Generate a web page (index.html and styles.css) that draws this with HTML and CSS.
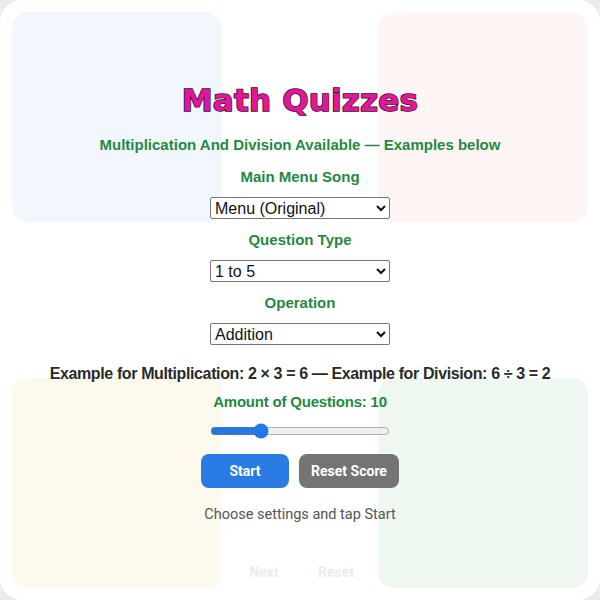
FILE: index.html
```html
<!DOCTYPE html>
<html lang="en">
<head>
    <meta charset="UTF-8">
    <meta name="viewport" content="width=device-width, initial-scale=1.0">
    <title>Math Quizzes</title>
    <link rel="stylesheet" href="styles.css">
</head>
<body>
    <div class="app">
        <!-- soft coloured tiles in the four corners -->
        <div class="tiles">
            <div class="tile tile-blue"></div>
            <div class="tile tile-pink"></div>
            <div class="tile tile-yellow"></div>
            <div class="tile tile-green"></div>
        </div>

        <div class="menu">
            <h1 class="title">Math Quizzes</h1>
            <p class="subtitle">Multiplication And Division Available — Examples below</p>

            <label for="songSelect" class="field-label">Main Menu Song</label>
            <select id="songSelect">
                <option>Menu (Original)</option>
                <option>Menu (Remix)</option>
            </select>

            <label for="typeSelect" class="field-label">Question Type</label>
            <select id="typeSelect">
                <option>1 to 5</option>
                <option>1 to 10</option>
                <option>1 to 12</option>
            </select>

            <label for="opSelect" class="field-label">Operation</label>
            <select id="opSelect">
                <option>Addition</option>
                <option>Subtraction</option>
                <option>Multiplication</option>
                <option>Division</option>
            </select>

            <p class="examples">Example for Multiplication: 2 × 3 = 6 — Example for Division: 6 ÷ 3 = 2</p>

            <label for="amountRange" class="field-label amount">Amount of Questions: <span id="amountValue">10</span></label>
            <input type="range" id="amountRange" min="1" max="35" value="10">

            <div class="actions">
                <button id="startBtn" class="btn btn-start">Start</button>
                <button id="resetScoreBtn" class="btn btn-reset">Reset Score</button>
            </div>

            <p id="status" class="status">Choose settings and tap Start</p>

            <div class="quiz-actions">
                <button class="btn btn-ghost" disabled>Next</button>
                <button class="btn btn-ghost" disabled>Reset</button>
            </div>
        </div>
    </div>

    <script>
        document.addEventListener('DOMContentLoaded', function() {
            const range = document.getElementById('amountRange');
            const amountValue = document.getElementById('amountValue');
            range.addEventListener('input', function() {
                amountValue.textContent = range.value;
            });
        });
    </script>
</body>
</html>
```

FILE: styles.css
```css
html, body {
    margin: 0;
    padding: 0;
    background-color: #ececec;
}

body {
    font-family: "Liberation Sans", Arial, sans-serif;
}

.app {
    position: relative;
    width: 600px;
    height: 600px;
    background-color: #ffffff;
    border-radius: 22px;
    overflow: hidden;
}

.tiles {
    position: absolute;
    inset: 0;
    padding: 12px;
    display: grid;
    grid-template-columns: 210px 1fr 210px;
    grid-template-rows: 210px 1fr 210px;
}

.tile {
    border-radius: 16px;
}

.tile-blue {
    grid-area: 1 / 1;
    background-color: #f2f7fe;
}

.tile-pink {
    grid-area: 1 / 3;
    background-color: #fef5f5;
}

.tile-yellow {
    grid-area: 3 / 1;
    background-color: #fef9ed;
}

.tile-green {
    grid-area: 3 / 3;
    background-color: #eff8f0;
}

.menu {
    position: absolute;
    inset: 0;
    display: flex;
    flex-direction: column;
    align-items: center;
    padding-top: 80px;
}

.title {
    margin: 0;
    font-family: "DejaVu Sans", sans-serif;
    font-size: 31px;
    font-weight: bold;
    line-height: 40px;
    color: #e0179b;
    -webkit-text-stroke: 1.5px #2a1020;
    paint-order: stroke fill;
    letter-spacing: 0.2px;
}

.subtitle {
    margin: 15px 0 0;
    font-size: 15px;
    font-weight: bold;
    line-height: 20px;
    color: #1f8a3f;
}

.field-label {
    display: block;
    margin-top: 11px;
    font-size: 15px;
    font-weight: bold;
    line-height: 20px;
    color: #1f8a3f;
}

.subtitle + .field-label {
    margin-top: 12px;
}

select {
    margin-top: 10px;
    width: 180px;
    height: 22px;
    font-family: "Liberation Sans", Arial, sans-serif;
    font-size: 16px;
    color: #111;
    background-color: #fff;
    border: 1px solid #767676;
    border-radius: 2px;
}

.examples {
    margin: 19px 0 0;
    font-size: 16px;
    font-weight: bold;
    line-height: 20px;
    letter-spacing: -0.38px;
    color: #2a2a2a;
}

.amount {
    margin-top: 8px;
    letter-spacing: -0.2px;
}

input[type="range"] {
    margin: 11px 0 0;
    width: 180px;
    accent-color: #2477e6;
}

.actions {
    display: flex;
    gap: 10px;
    margin-top: 15px;
}

.btn {
    font-family: Roboto, "Liberation Sans", sans-serif;
    font-size: 14px;
    font-weight: bold;
    color: #fff;
    border: none;
    border-radius: 8px;
    height: 34px;
    cursor: pointer;
}

.btn-start {
    width: 88px;
    background-color: #2a7be4;
}

.btn-reset {
    width: 100px;
    background-color: #747474;
}

.status {
    margin: 17px 0 0;
    font-family: Roboto, "Liberation Sans", sans-serif;
    font-size: 14.5px;
    line-height: 20px;
    color: #555;
}

.quiz-actions {
    display: flex;
    gap: 12px;
    margin-top: 30px;
}

.btn-ghost {
    width: 60px;
    background: transparent;
    color: #ececec;
}
```
